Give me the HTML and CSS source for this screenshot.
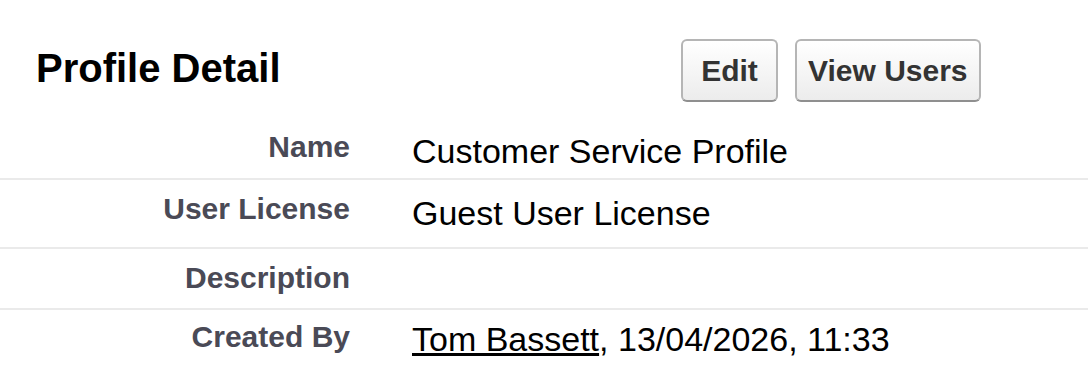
FILE: index.html
```html
<!DOCTYPE html>
<html lang="en">
<head>
    <meta charset="UTF-8">
    <title>Profile Detail</title>
    <link rel="stylesheet" href="styles.css">
</head>
<body>
    <div class="page-block">
        <div class="pb-header">
            <h2 class="pb-title">Profile Detail</h2>
            <div class="pb-buttons">
                <button type="button" class="btn">Edit</button>
                <button type="button" class="btn">View Users</button>
            </div>
        </div>
        <div class="detail-list">
            <div class="detail-row first">
                <div class="label-col">Name</div>
                <div class="data-col">Customer Service Profile</div>
            </div>
            <div class="detail-row">
                <div class="label-col">User License</div>
                <div class="data-col">Guest User License</div>
            </div>
            <div class="detail-row">
                <div class="label-col">Description</div>
                <div class="data-col"></div>
            </div>
            <div class="detail-row last">
                <div class="label-col">Created By</div>
                <div class="data-col"><a href="#">Tom Bassett</a>, 13/04/2026, 11:33</div>
            </div>
        </div>
    </div>
</body>
</html>
```

FILE: styles.css
```css
body {
    margin: 0;
    font-family: "Liberation Sans", Arial, sans-serif;
    background: #fff;
    color: #000;
}
.pb-header {
    display: flex;
    align-items: flex-start;
    height: 118px;
    box-sizing: border-box;
    padding: 39px 0 0 36px;
}
.pb-title {
    width: 645px;
    margin: 6px 0 0 0;
    font-size: 40px;
    line-height: 46px;
    font-weight: bold;
}
.pb-buttons {
    display: flex;
    gap: 17px;
}
.btn {
    box-sizing: border-box;
    min-width: 97px;
    height: 63px;
    padding: 0 11px;
    font-family: "Liberation Sans", Arial, sans-serif;
    font-size: 30px;
    font-weight: bold;
    color: #333;
    background: linear-gradient(#ffffff, #ececec);
    border: 2px solid #b5b5b5;
    border-bottom-color: #8f8f8f;
    border-radius: 6px;
    cursor: pointer;
}
.detail-row {
    display: grid;
    grid-template-columns: 350px 1fr;
    column-gap: 62px;
    border-bottom: 2px solid #eaeaea;
}
.detail-row.last {
    border-bottom: none;
}
.label-col {
    padding: 11px 0 13px 0;
    text-align: right;
    font-size: 30px;
    line-height: 35px;
    font-weight: bold;
    color: #4a4a56;
}
.data-col {
    padding: 13px 0 14px 0;
    font-size: 34px;
    line-height: 40px;
    color: #000;
}
.first .label-col {
    padding-bottom: 10px;
}
.first .data-col {
    padding-bottom: 7px;
}
.last .label-col {
    padding-top: 9px;
}
.last .data-col {
    padding-top: 9px;
}
.data-col a {
    color: #000;
    text-decoration: underline;
}
```
